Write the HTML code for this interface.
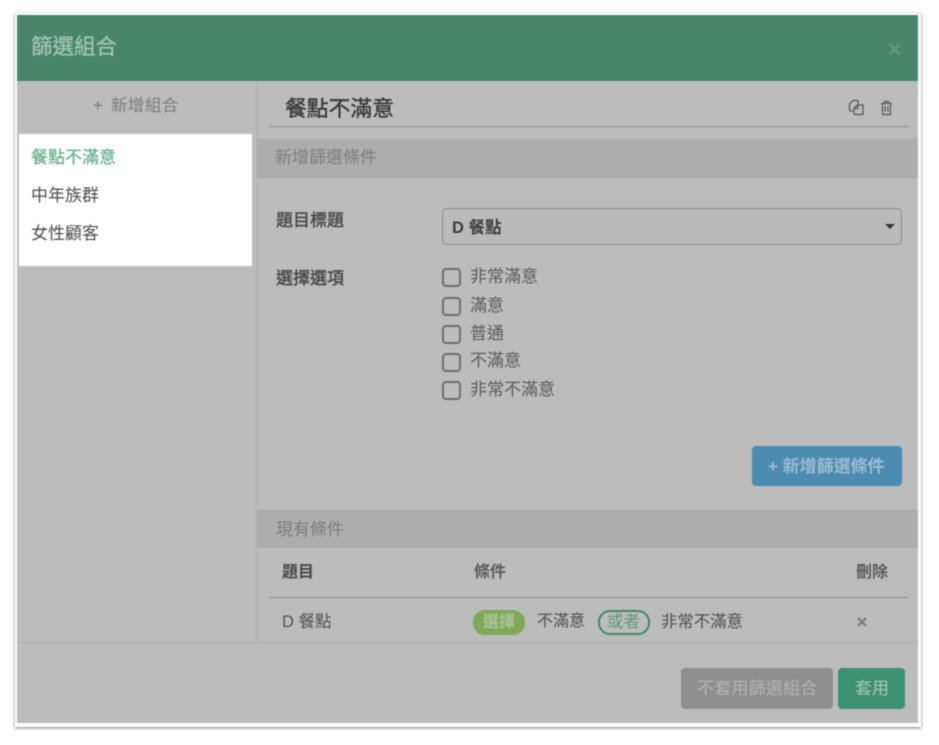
<!DOCTYPE html>
<html lang="zh-Hant"><head><meta charset="utf-8"><style>
html,body{margin:0;padding:0;background:#fff;width:939px;height:745px;overflow:hidden}
*{box-sizing:border-box}
body{font-family:"Liberation Sans","Noto Sans CJK TC",sans-serif;color:#444}
#wrap{position:relative;width:939px;height:745px;filter:blur(.6px)}
.a{position:absolute}
.t{position:absolute;white-space:nowrap;line-height:1}
.cb{position:absolute;left:442px;width:19px;height:19px;border:2px solid #6d6d6d;border-radius:4px}
</style></head><body><div id="wrap">
<div class="a" style="left:15px;top:13px;width:906px;height:714px;background:#fff;box-shadow:0 1px 3px rgba(0,0,0,.55)"></div>
<div class="a" style="left:17px;top:15px;width:901px;height:708px;background:#bcbcbc"></div>
<div class="a" style="left:17px;top:15px;width:901px;height:66px;background:#47866a"></div>
<div class="t" style="left:31px;top:37px;font-size:21.500px;color:#a5c4b5;-webkit-text-stroke:.3px #a5c4b5">篩選組合</div>
<svg class="a" style="left:888px;top:43px" width="13" height="13" viewBox="0 0 13 13"><path d="M1.500 1.500L11.500 11.500M11.500 1.500L1.500 11.500" stroke="#629480" stroke-width="3"/></svg>

<div class="a" style="left:256px;top:81px;width:1px;height:561px;background:#b2b2b2"></div>
<div class="t" style="left:93px;top:98px;font-size:16.500px;color:#7c7c7c;word-spacing:3px;letter-spacing:.4px">+ 新增組合</div>
<div class="a" style="left:19px;top:134px;width:233px;height:132px;background:#fff"></div>
<div class="t" style="left:31px;top:149px;font-size:17px;color:#65ad8c;-webkit-text-stroke:.2px #65ad8c">餐點不滿意</div>
<div class="t" style="left:31px;top:187px;font-size:17px;color:#4c4c4c">中年族群</div>
<div class="t" style="left:31px;top:225px;font-size:17px;color:#4c4c4c">女性顧客</div>

<div class="t" style="left:285px;top:98px;font-size:21.800px;color:#3a3a3a;-webkit-text-stroke:.4px #3a3a3a">餐點不滿意</div>
<div class="a" style="left:269px;top:126px;width:639px;height:1px;background:#8f8f8f"></div>
<svg class="a" style="left:848px;top:99px" width="18" height="18" viewBox="0 0 18 18" fill="none" stroke="#555" stroke-width="1.200"><path d="M5 12H2.500C2 12 1.500 11.500 1.500 11V5L5 1.500H9C9.500 1.500 10 2 10 2.500V6"/><path d="M6 9L9.500 6H15V14.500C15 15 14.500 15.500 14 15.500H7C6.500 15.500 6 15 6 14.500Z"/><path d="M6 9.500H9.500V6"/></svg>
<svg class="a" style="left:880px;top:100px" width="13" height="16" viewBox="0 0 13 16" fill="none" stroke="#555" stroke-width="1.200"><path d="M1 3.500H12M4.500 3.500V1.500H8.500V3.500M2.500 3.500V14.500H10.500V3.500M5 6V12M8 6V12"/></svg>

<div class="a" style="left:257px;top:139px;width:661px;height:39px;background:#adadad"></div>
<div class="t" style="left:275px;top:149px;font-size:17px;color:#7d7d7d">新增篩選條件</div>
<div class="t" style="left:276px;top:212px;font-size:17px;color:#484848;-webkit-text-stroke:.4px #484848">題目標題</div>
<div class="a" style="left:442px;top:208px;width:460px;height:37px;background:#bababa;border:1px solid #8e8e8e;border-radius:4px"></div>
<div class="t" style="left:452px;top:220px;font-size:16.500px;color:#3c3c3c;font-weight:bold">D 餐點</div>
<div class="a" style="left:885px;top:224px;width:0;height:0;border-left:5px solid transparent;border-right:5px solid transparent;border-top:5px solid #333"></div>

<div class="t" style="left:276px;top:270px;font-size:17px;color:#484848;-webkit-text-stroke:.4px #484848">選擇選項</div>
<div class="cb" style="top:268px"></div><div class="t" style="left:470px;top:268px;font-size:17px;color:#5c5c5c">非常滿意</div>
<div class="cb" style="top:297px"></div><div class="t" style="left:470px;top:297px;font-size:17px;color:#5c5c5c">滿意</div>
<div class="cb" style="top:325px"></div><div class="t" style="left:470px;top:325px;font-size:17px;color:#5c5c5c">普通</div>
<div class="cb" style="top:353px"></div><div class="t" style="left:470px;top:352px;font-size:17px;color:#5c5c5c">不滿意</div>
<div class="cb" style="top:381px"></div><div class="t" style="left:470px;top:381px;font-size:17px;color:#5c5c5c">非常不滿意</div>

<div class="a" style="left:752px;top:446px;width:150px;height:40px;background:#4c8cb2;border-radius:4px"></div>
<div class="t" style="left:768px;top:458px;font-size:17px;color:#9cbccf;font-weight:bold">+ 新增篩選條件</div>

<div class="a" style="left:257px;top:510px;width:661px;height:38px;background:#adadad"></div>
<div class="t" style="left:276px;top:521px;font-size:17px;color:#7d7d7d">現有條件</div>
<div class="t" style="left:282px;top:565px;font-size:16px;color:#484848;font-weight:bold">題目</div>
<div class="t" style="left:474px;top:565px;font-size:16px;color:#5c5c5c;font-weight:bold">條件</div>
<div class="t" style="left:856px;top:565px;font-size:16px;color:#5c5c5c;font-weight:bold">刪除</div>
<div class="a" style="left:269px;top:597px;width:639px;height:1px;background:#8f8f8f"></div>
<div class="t" style="left:282px;top:614px;font-size:16.500px;color:#505050">D 餐點</div>
<div class="a" style="left:473px;top:610px;width:52px;height:25px;background:#7fa858;border-radius:12px"></div>
<div class="t" style="left:483px;top:615px;font-size:16px;color:#aec599;font-weight:bold">選擇</div>
<div class="t" style="left:537px;top:614px;font-size:16px;color:#505050">不滿意</div>
<div class="a" style="left:598px;top:610px;width:52px;height:25px;border:2px solid #47866a;border-radius:12px"></div>
<div class="t" style="left:607px;top:614px;font-size:16.500px;color:#5f9a80">或者</div>
<div class="t" style="left:661px;top:614px;font-size:16.400px;color:#505050">非常不滿意</div>
<svg class="a" style="left:857px;top:617px" width="10" height="10" viewBox="0 0 10 10"><path d="M1 1L9 9M9 1L1 9" stroke="#7f7f7f" stroke-width="2.400"/></svg>

<div class="a" style="left:17px;top:642px;width:901px;height:1px;background:#b0b0b0"></div>
<div class="a" style="left:681px;top:668px;width:152px;height:41px;background:#8f8f8f;border-radius:4px"></div>
<div class="t" style="left:697px;top:680px;font-size:17.200px;color:#b4b4b4">不套用篩選組合</div>
<div class="a" style="left:838px;top:668px;width:67px;height:41px;background:#3d9170;border-radius:4px"></div>
<div class="t" style="left:855px;top:680px;font-size:17px;color:#a5c9b8">套用</div>
</div></body></html>
